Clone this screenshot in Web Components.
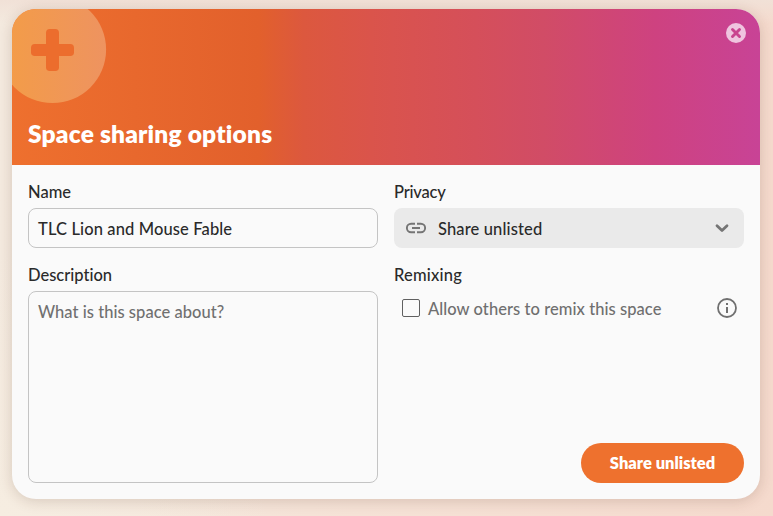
<!DOCTYPE html>
<html lang="en"><head><meta charset="utf-8"><title>Space sharing options</title>
<style>
html,body{height:100%}
body{margin:0;overflow:hidden;font:500 16.5px/20px Lato,"Noto Sans",sans-serif;font-variant-ligatures:none;color:#2a2a2a;background:radial-gradient(circle at 0 100%,#f6ede1 0,transparent 270px),linear-gradient(180deg,#f1e1d7 0,transparent 24px),linear-gradient(90deg,#f4eadf 0,#f5e3d7 40%,#f5dacd 100%)}
</style></head><body>
<sharing-dialog></sharing-dialog>
<script>
const define=(name,html)=>customElements.define(name,class extends HTMLElement{
  constructor(){super();const t=document.createElement('template');t.innerHTML=html;this.attachShadow({mode:'open'}).append(t.content.cloneNode(true));}
});
define('dialog-header',`<style>
:host{display:flex;position:relative;height:156px;box-sizing:border-box;padding:0 16px 19px;align-items:flex-end;overflow:hidden;color:#fff;background:linear-gradient(90deg,#ee702e 0,#e2602c 33%,#dc583e 39%,#da544b 48%,#d54f5a 62%,#d14c66 71%,#ce4280 86%,#c84396 100%)}
.badge{position:absolute;left:-12px;top:-12px}.close{position:absolute;right:14px;top:14px;width:20px;height:20px;padding:0;border:0;background:none}
svg{display:block}h1{margin:0;font-size:24.5px;line-height:24px;font-weight:800;letter-spacing:.2px}
</style>
<svg class="badge" width="107" height="107" viewBox="0 0 107 107"><defs><linearGradient id="g"><stop offset=".1" stop-color="#f39c49"/><stop offset="1" stop-color="#ee9360"/></linearGradient></defs><circle cx="52.5" cy="52.5" r="53.6" fill="url(#g)"/><g fill="#ec6d2d"><rect x="46" y="32" width="13" height="42" rx="3.8"/><rect x="31" y="47" width="43" height="12" rx="3.8"/></g></svg>
<h1><slot></slot></h1>
<button class="close" aria-label="Close"><svg width="20" height="20"><circle cx="10" cy="10" r="10" fill="#efc4df"/><path d="M6.5 6.5l7 7m0-7l-7 7" stroke="#c9438f" stroke-width="2.9" stroke-linecap="round"/></svg></button>`);
define('form-field',`<style>:host{display:flex;flex-direction:column;gap:7px}.label{box-sizing:border-box;height:20px;padding-top:1px;line-height:20px}</style><div class="label"><slot name="label"></slot></div><slot></slot>`);
define('text-box',`<style>:host{display:block;box-sizing:border-box;border:1px solid #c4c4c4;border-radius:8px;padding:10px 9px 8px;background:#fafafa}</style><slot></slot>`);
define('privacy-select',`<style>:host{display:flex;align-items:center;box-sizing:border-box;height:40px;border-radius:8px;padding:0 14px 0 12px;background:#eaeaea}svg{display:block}.value{flex:1;margin-left:12px;padding-top:1px}</style>
<svg width="20" height="20" fill="none" stroke="#757575" stroke-width="1.9"><path d="M9 5.8H5.1a4.2 4.2 0 0 0 0 8.4H9M11 5.8h3.9a4.2 4.2 0 0 1 0 8.4H11M6 10h8"/></svg><span class="value"><slot></slot></span><svg width="16" height="16" fill="none" stroke="#757575" stroke-width="2.8"><path d="M3 5.8L8 10.6l5-4.8" stroke-linejoin="round" stroke-linecap="round"/></svg>`);
define('remix-option',`<style>:host{display:flex;align-items:center;height:20px;margin-top:7px;padding:0 7px 0 8px;color:#6f6f6f}.check{box-sizing:border-box;width:18px;height:18px;border:1px solid #606060;border-radius:2px}.text{flex:1;margin-left:8px;padding-top:1px}svg{display:block}</style><span class="check"></span><span class="text"><slot></slot></span><svg width="20" height="20"><circle cx="10" cy="10" r="9" fill="none" stroke="#707070" stroke-width="1.8"/><path d="M9 5h2v2H9zm0 4h2v6H9z" fill="#707070"/></svg>`);
define('share-button',`<style>:host{display:block}button{display:block;width:163px;height:40px;border:0;border-radius:20px;padding:1px 0 0;background:#ee712e;color:#fff;font:800 16.5px/39px Lato,sans-serif;font-variant-ligatures:none}</style><button><slot></slot></button>`);
define('sharing-dialog',`<style>
:host{display:flex;flex-direction:column;box-sizing:border-box;width:748px;height:490px;margin:9px 0 0 12px;border-radius:24px;overflow:hidden;background:#fafafa;box-shadow:0 2px 14px rgba(80,40,20,.18)}
.body{flex:1;display:grid;grid-template-columns:350px 350px;gap:16px;padding:16px}.col{display:flex;flex-direction:column;gap:16px}.name{height:40px;letter-spacing:.12px}.desc{height:192px;color:#707070;letter-spacing:.03px}
.privacy{letter-spacing:-.2px}privacy-select{letter-spacing:.13px}.remixing{letter-spacing:.2px}remix-option{letter-spacing:.06px}share-button{align-self:flex-end;margin-top:auto}
</style>
<dialog-header>Space sharing options</dialog-header>
<div class="body"><div class="col"><form-field><span slot="label">Name</span><text-box class="name">TLC Lion and Mouse Fable</text-box></form-field>
<form-field><span slot="label">Description</span><text-box class="desc">What is this space about?</text-box></form-field></div>
<div class="col"><form-field><span class="privacy" slot="label">Privacy</span><privacy-select>Share unlisted</privacy-select></form-field>
<form-field><span class="remixing" slot="label">Remixing</span><remix-option>Allow others to remix this space</remix-option></form-field>
<share-button>Share unlisted</share-button></div></div>`);
</script></body></html>
